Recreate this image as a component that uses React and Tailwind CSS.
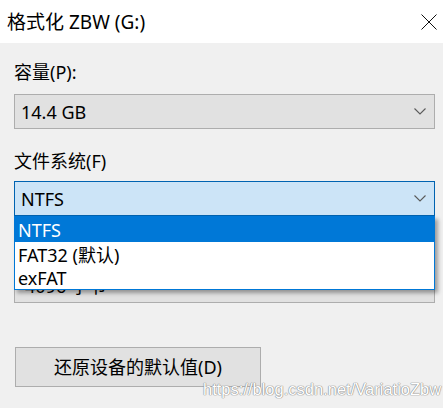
import React from "react";

function Chevron() {
  return (
    <svg width="12" height="7" viewBox="0 0 12 7" className="shrink-0">
      <polyline points="0.5,0.5 6,6 11.5,0.5" fill="none" stroke="#5a5a5a" strokeWidth="1.1" />
    </svg>
  );
}

export default function App() {
  return (
    <div className="relative w-[443px] h-[408px] overflow-hidden bg-[#f0f0f0] text-black font-['Noto_Sans','Noto_Sans_CJK_SC',sans-serif]">
      {/* Title bar */}
      <div className="flex h-[43px] items-center justify-between bg-white pl-[7px] pr-[6px]">
        <span className="text-[19px] leading-[24px]">格式化 ZBW (G:)</span>
        <svg width="16" height="16" viewBox="0 0 16 16">
          <path d="M0.5 0.5 L15.5 15.5 M15.5 0.5 L0.5 15.5" stroke="#111" strokeWidth="1" fill="none" />
        </svg>
      </div>

      {/* Body */}
      <div className="flex flex-col pl-[14px] pr-[8px]">
        <div className="mt-[17px] text-[18px] leading-[24px]">容量(P):</div>
        <div className="mt-[10px] flex h-[35px] items-center justify-between border border-[#adadad] bg-[#e1e1e1] pl-[6px] pr-[8px]">
          <span className="text-[18px] leading-[24px]">14.4 GB</span>
          <Chevron />
        </div>

        <div className="mt-[20px] text-[18px] leading-[24px]">文件系统(F)</div>
        <div className="mt-[8px] flex h-[35px] items-center justify-between border border-[#0063b1] bg-[#cce4f7] pl-[6px] pr-[8px]">
          <span className="text-[18px] leading-[24px]">NTFS</span>
          <Chevron />
        </div>

        <div className="mt-[52px] flex h-[35px] items-center justify-between border border-[#adadad] bg-[#e1e1e1] pl-[10px] pr-[8px]">
          <span className="text-[18px] leading-[24px]">4096 字节</span>
          <Chevron />
        </div>

        <div className="mt-[44px] ml-[1px] flex h-[40px] w-[246px] items-center justify-center border border-[#adadad] bg-[#e1e1e1]">
          <span className="text-[18px] leading-[24px]">还原设备的默认值(D)</span>
        </div>
      </div>

      {/* Open dropdown list overlay */}
      <div className="absolute left-[14px] top-[216px] w-[421px] border border-[#0078d7] bg-white shadow-[3px_3px_4px_rgba(0,0,0,0.35)]">
        <div className="flex h-[25px] items-center bg-[#0078d7] pl-[3px] text-[18px] leading-[24px] text-white">NTFS</div>
        <div className="flex h-[25px] items-center pl-[3px] text-[18px] leading-[24px]">FAT32 (默认)</div>
        <div className="flex h-[22px] items-center pl-[3px] text-[18px] leading-[24px]">exFAT</div>
      </div>

      {/* Watermark */}
      <div className="absolute left-[203px] top-[379px] font-['Liberation_Sans',Arial,sans-serif] text-[16.5px] leading-[20px] text-white [text-shadow:0_0_1px_#8a8a8a,0_0_1px_#8a8a8a,0_0_1px_#8a8a8a]">
        https://blog.csdn.net/VariatioZbw
      </div>
    </div>
  );
}
